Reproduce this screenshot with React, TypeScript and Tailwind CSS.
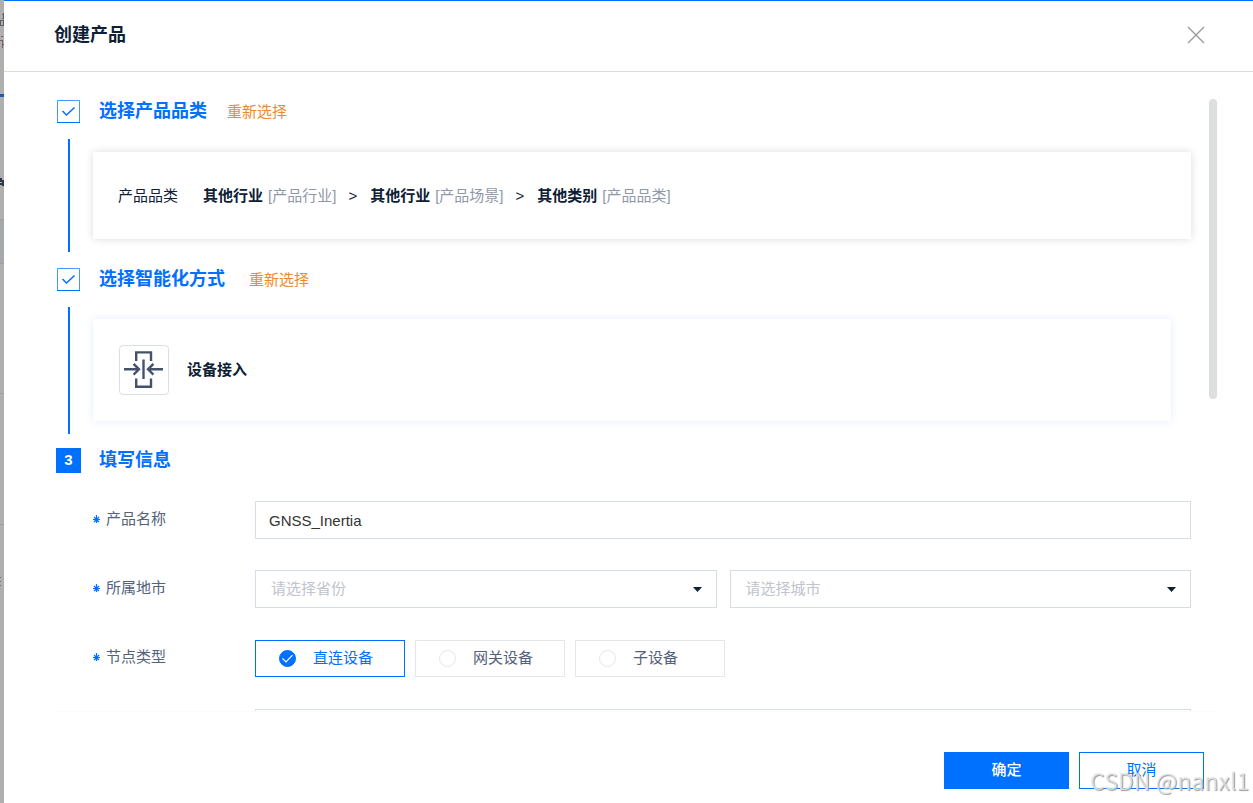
import { useState } from 'react';
import type { ReactNode } from 'react';

const nodeTypes = [
  { value: 'direct', label: '直连设备' },
  { value: 'gateway', label: '网关设备' },
  { value: 'child', label: '子设备' },
];

const category = [
  { name: '其他行业', kind: '[产品行业]' },
  { name: '其他行业', kind: '[产品场景]' },
  { name: '其他类别', kind: '[产品品类]' },
];

// sliver of the dimmed page that stays visible beside the drawer
function PageEdge() {
  return (
    <div className="w-1 shrink-0 overflow-hidden bg-[#b0afae]">
      <svg width="4" height="803" viewBox="0 0 4 803" shapeRendering="crispEdges" aria-hidden="true">
        <path d="M0 219h4v44H0z" fill="#a6a9ac" />
        <path d="M0 219h4M0 263h4M0 393h4M0 524h4" stroke="#9fa0a2" />
        <path d="M0 94h4v3H0z" fill="#1a5cbb" />
        <path d="M2 14h2M2 18h2M0 20h4M0 25h4" stroke="#6b6259" />
        <path d="M3 13v6M0.5 20v6M3 20v6" stroke="#54606c" />
        <path d="M1 36h2M0 40h3M2.5 40v8M3 44h1" stroke="#76606a" />
        <path d="M0 179h2M0 181h4M0 184h4M3 182v4" stroke="#2d3a4c" strokeWidth="2" />
        <path d="M0 577h1M0 581h1M0 585h1" stroke="#4a7aa8" />
      </svg>
    </div>
  );
}

function CheckBoxIcon() {
  return (
    <svg width="23" height="23" viewBox="0 0 23 23" fill="none" stroke="#0070ff" aria-hidden="true">
      <path d="M22.5 0.5H0.5V22.5H22.5Z" stroke="#4596ff" />
      <path d="M0 22.5H23" />
      <path d="M5.5 11L9.5 15L17.5 7.5" strokeWidth="1.5" />
    </svg>
  );
}

function DeviceAccessIcon() {
  return (
    <svg width="48" height="48" viewBox="0 0 48 48" fill="none" stroke="#44536b" strokeWidth="2.4" aria-hidden="true">
      <path d="M16.2 15V6.4H31V15" />
      <path d="M16.2 32.5V40.7H31V32.5" />
      <path d="M23.5 13.5V33" />
      <path d="M4 23.3H18.6M13.6 17.9L19 23.3L13.6 28.7" />
      <path d="M43 23.3H28.4M33.4 17.9L28 23.3L33.4 28.7" />
    </svg>
  );
}

function RequiredMark() {
  return (
    <svg width="8" height="8" viewBox="0 0 8 8" stroke="#0070ff" aria-hidden="true">
      <path d="M4.5 0V8M1 4.5H8M2 2L7 7M7 2L2 7" strokeWidth="1.2" />
    </svg>
  );
}

function StepHead({ icon, title, children }: { icon: ReactNode; title: string; children?: ReactNode }) {
  return (
    <div className="flex h-[25px] items-center">
      <span className="flex w-[25px] shrink-0 items-center justify-center">{icon}</span>
      <h2 className="ml-[18px] text-[18px] leading-[27px] font-bold text-[#0070ff]">{title}</h2>
      {children}
    </div>
  );
}

function FormRow({ label, htmlFor, children }: { label: string; htmlFor?: string; children: ReactNode }) {
  return (
    <div className="flex items-start">
      <label htmlFor={htmlFor} className="flex w-[163px] shrink-0 items-center gap-1.5 leading-9 text-[#53617a]">
        <RequiredMark />
        {label}
      </label>
      <div className="flex min-w-0 flex-1">{children}</div>
    </div>
  );
}

function RegionSelect({ id, placeholder }: { id: string; placeholder: string }) {
  return (
    <div className="relative flex-1">
      <select
        id={id}
        aria-label={placeholder}
        className="h-[38px] w-full appearance-none border border-[#d7dde8] bg-white pl-[15px] pr-8 pt-px text-[#c0c4cc] outline-none focus:border-[#0070ff]"
      >
        <option value="">{placeholder}</option>
      </select>
      <svg
        width="9"
        height="5"
        viewBox="0 0 9 5"
        fill="#0e2034"
        aria-hidden="true"
        className="pointer-events-none absolute right-[15px] top-[17px]"
      >
        <path d="M0 0H9L4.5 5Z" />
      </svg>
    </div>
  );
}

export default function App() {
  const [name, setName] = useState('GNSS_Inertia');
  const [nodeType, setNodeType] = useState('direct');

  return (
    <div className="flex h-screen overflow-hidden bg-white font-['Liberation_Sans','Noto_Sans_CJK_SC',sans-serif] text-[15px] text-[#0e2034]">
      <PageEdge />
      <main className="flex min-w-0 flex-1 flex-col border-t border-[#0070ff]">
        <header className="flex h-[71px] shrink-0 items-center justify-between border-b border-[#d9dbe6] pb-0.5 pl-[50px] pr-12">
          <h1 className="text-[18px] font-bold">创建产品</h1>
          <button type="button" aria-label="关闭" className="cursor-pointer">
            <svg width="18" height="18" viewBox="0 0 18 18" stroke="#999" strokeWidth="1.3" aria-hidden="true">
              <path d="M1 1L17 17M17 1L1 17" />
            </svg>
          </button>
        </header>

        <div className="flex min-h-0 flex-1 overflow-hidden pl-[52px] pr-9 pt-[27px]">
          <div className="min-w-0 flex-1">
            <StepHead icon={<CheckBoxIcon />} title="选择产品品类">
              <a href="#category" className="ml-5 leading-[25px] text-[#f0892b]">重新选择</a>
            </StepHead>
            <section className="my-[15px] ml-3 border-l-2 border-[#0070ff] py-[13px] pl-[23px]">
              <div className="flex h-[87px] items-center bg-white pl-[25px] pt-0.5 shadow-[0_0_8px_rgba(0,0,0,0.14)]">
                <span className="mr-[25px]">产品品类</span>
                <div className="flex items-center gap-3">
                  {category.map((item, i) => (
                    <div key={item.kind} className="flex items-center gap-[13px]">
                      {i > 0 && <span>&gt;</span>}
                      <span className="flex gap-[5px]">
                        <b>{item.name}</b>
                        <span className="text-[#8f98a8]">{item.kind}</span>
                      </span>
                    </div>
                  ))}
                </div>
              </div>
            </section>

            <StepHead icon={<CheckBoxIcon />} title="选择智能化方式">
              <a href="#access" className="ml-6 leading-[25px] text-[#f0892b]">重新选择</a>
            </StepHead>
            <section className="mb-[14px] mt-[15px] ml-3 border-l-2 border-[#0070ff] pb-[13px] pt-3 pl-[23px] pr-5">
              <div className="flex h-[102px] items-center gap-[18px] bg-white pl-[26px] shadow-[0_0_8px_rgba(0,100,255,0.12)]">
                <span className="rounded-sm border border-[#d9dfe8]">
                  <DeviceAccessIcon />
                </span>
                <b>设备接入</b>
              </div>
            </section>

            <StepHead
              icon={
                <span className="flex h-[25px] w-[25px] items-center justify-center bg-[#0070ff] font-bold text-white">3</span>
              }
              title="填写信息"
            />
            <form className="mt-7 flex flex-col gap-[31px] pl-9">
              <FormRow label="产品名称" htmlFor="name">
                <input
                  id="name"
                  type="text"
                  value={name}
                  onChange={(e) => setName(e.target.value)}
                  className="h-[38px] w-full border border-[#d7dde8] px-[13px] text-[#333] outline-none focus:border-[#0070ff]"
                />
              </FormRow>
              <FormRow label="所属地市" htmlFor="province">
                <div className="flex flex-1 gap-[13px]">
                  <RegionSelect id="province" placeholder="请选择省份" />
                  <RegionSelect id="city" placeholder="请选择城市" />
                </div>
              </FormRow>
              <FormRow label="节点类型">
                <div role="radiogroup" aria-label="节点类型" className="flex gap-2.5 pb-px pt-px">
                  {nodeTypes.map((type) => (
                    <label
                      key={type.value}
                      className="flex h-[37px] w-[150px] cursor-pointer items-center gap-[17px] border border-[#e4e6ea] pl-[23px] text-[#53617a] has-checked:border-[#0070ff] has-checked:text-[#0070ff]"
                    >
                      <span className="relative flex">
                        <input
                          type="radio"
                          name="nodeType"
                          value={type.value}
                          checked={nodeType === type.value}
                          onChange={() => setNodeType(type.value)}
                          className="h-[17px] w-[17px] appearance-none rounded-full border border-[#e4e6ea] checked:border-[#0070ff] checked:bg-[#0070ff]"
                        />
                        {nodeType === type.value && (
                          <svg
                            width="17"
                            height="17"
                            viewBox="0 0 17 17"
                            fill="none"
                            stroke="#fff"
                            strokeWidth="1.2"
                            aria-hidden="true"
                            className="pointer-events-none absolute inset-0"
                          >
                            <path d="M3.5 8.5L7 12L13.5 5.2" />
                          </svg>
                        )}
                      </span>
                      {type.label}
                    </label>
                  ))}
                </div>
              </FormRow>
              <input
                type="text"
                aria-label="其他信息"
                className="ml-[163px] h-[38px] border border-[#d7dde8] px-[13px] outline-none"
              />
            </form>
          </div>
          <div className="ml-[18px] h-[300px] w-2 shrink-0 rounded-full bg-[#dddee0]" />
        </div>

        <footer className="ml-[50px] mr-9 flex shrink-0 justify-end gap-2.5 border-t border-[#fbfbfc] pb-[14px] pr-[13px] pt-10">
          <button type="button" className="h-[37px] w-[125px] cursor-pointer bg-[#0070ff] font-medium text-white">
            确定
          </button>
          <button type="button" className="h-[37px] w-[125px] cursor-pointer border border-[#0070ff] text-[#0070ff]">
            取消
          </button>
        </footer>
      </main>

      <span className="pointer-events-none fixed bottom-1 right-1 font-['Noto_Sans_CJK_SC',sans-serif] text-[23px] leading-[38px] text-[#e6e6e6]/80 [text-shadow:1px_1px_1px_#9c9c9c]">
        CSDN @nanxl1
      </span>
    </div>
  );
}
